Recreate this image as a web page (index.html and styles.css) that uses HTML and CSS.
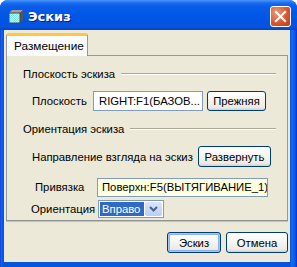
FILE: index.html
```html
<!DOCTYPE html>
<html lang="ru">
<head>
    <meta charset="UTF-8">
    <title>Эскиз</title>
    <link rel="stylesheet" href="styles.css">
</head>
<body>
    <div class="window">
        <div class="titlebar">
            <svg class="app-icon" width="14" height="13" viewBox="0 0 14 13">
                <defs>
                    <pattern id="dots" width="2" height="2" patternUnits="userSpaceOnUse">
                        <rect width="2" height="2" fill="#7fe6e6"/>
                        <rect width="1" height="1" fill="#c8fafa"/>
                        <rect x="1" y="1" width="1" height="1" fill="#c8fafa"/>
                    </pattern>
                </defs>
                <polygon points="3,0 14,0 11,3 0,3" fill="#a0a0a0"/>
                <polygon points="11,3 14,0 14,10 11,13" fill="#555"/>
                <rect x="0" y="3" width="11" height="10" fill="url(#dots)" stroke="#444" stroke-width="1"/>
            </svg>
            <span class="title">Эскиз</span>
            <button class="close" type="button">
                <svg width="13" height="13" viewBox="0 0 13 13">
                    <path d="M2 2 L11 11 M11 2 L2 11" stroke="#fff" stroke-width="2.2" stroke-linecap="square"/>
                </svg>
            </button>
        </div>

        <div class="client">
            <div class="tabs">
                <div class="tab">Размещение</div>
            </div>

            <div class="panel">
                <div class="group-title">Плоскость эскиза<span class="rule"></span></div>
                <div class="row row-plane">
                    <span class="label">Плоскость</span>
                    <div class="field field-plane">RIGHT:F1(БАЗОВ...</div>
                    <button class="btn btn-prev" type="button">Прежняя</button>
                </div>

                <div class="group-title">Ориентация эскиза<span class="rule rule-orient"></span></div>
                <div class="row row-dir">
                    <span class="label">Направление взгляда на эскиз</span>
                    <button class="btn btn-flip" type="button">Развернуть</button>
                </div>
                <div class="row row-ref">
                    <span class="label">Привязка</span>
                    <div class="field field-ref">Поверхн:F5(ВЫТЯГИВАНИЕ_1)</div>
                </div>
                <div class="row row-orient">
                    <span class="label">Ориентация</span>
                    <div class="combo">
                        <span class="combo-value">Вправо</span>
                        <span class="combo-arrow">
                            <svg width="9" height="6" viewBox="0 0 9 6">
                                <path d="M1 1 L4.5 4.5 L8 1" fill="none" stroke="#4d6185" stroke-width="2"/>
                            </svg>
                        </span>
                    </div>
                </div>
            </div>

            <div class="footer">
                <button class="btn btn-default" type="button">Эскиз</button>
                <button class="btn btn-cancel" type="button">Отмена</button>
            </div>
        </div>
    </div>
</body>
</html>
```

FILE: styles.css
```css
body {
    margin: 0;
    font-family: "Liberation Sans", Arial, sans-serif;
    font-size: 11.3px;
    color: #000;
    background: #fff;
}

.window {
    width: 297px;
    height: 267px;
    display: flex;
    flex-direction: column;
    background: linear-gradient(to right, #0831d9 0, #1667ee 1px, #0855dd 3px, #0855dd 290px, #166aee 292px, #0c5ae4 295px, #0831d9 297px);
    border-radius: 8px 8px 0 0;
    overflow: hidden;
}

.titlebar {
    height: 30px;
    display: flex;
    align-items: center;
    padding: 0 6px 0 9px;
    background: linear-gradient(#4a96fa 0, #1b6cf0 3px, #0a5ee9 6px, #0058e6 14px, #0054e3 22px, #0a52dc 27px, #0743c2 30px);
    flex-shrink: 0;
}

.app-icon {
    margin-top: 3px;
    margin-right: 5px;
}

.title {
    color: #fff;
    font-family: "DejaVu Sans", sans-serif;
    font-weight: bold;
    font-size: 13px;
    text-shadow: 1px 1px 0 #0a1d8f;
    flex: 1;
    margin-top: 2px;
}

.close {
    width: 21px;
    height: 21px;
    padding: 0;
    margin-top: 3px;
    border: 1px solid #fff;
    border-radius: 3px;
    background: radial-gradient(circle at 30% 30%, #ec9a7c 0, #d9572f 55%, #c2391a 100%);
    display: flex;
    align-items: center;
    justify-content: center;
}

.client {
    flex: 1;
    margin: 0 7px 5px 4px;
    background: #ece9d8;
    padding: 2px 2px 0 2px;
    display: flex;
    flex-direction: column;
}

.tabs {
    display: flex;
    height: 23px;
}

.tab {
    width: 82px;
    background: #fcfcfe;
    border: 1px solid #919b9c;
    border-top: 3px solid #ffc83c;
    border-bottom: none;
    border-radius: 3px 3px 0 0;
    padding: 3px 0 0 7px;
    box-sizing: border-box;
    font-size: 11.8px;
    position: relative;
    top: 1px;
    z-index: 1;
}

.panel {
    height: 166px;
    box-sizing: border-box;
    border: 1px solid #919b9c;
    border-bottom-color: #8e9493;
    box-shadow: 0 1px 0 #c5c2b2;
    background: #ece9d8;
    padding: 11px 0 0 16px;
}

.group-title {
    display: flex;
    align-items: center;
    height: 14px;
    line-height: 14px;
}

.rule {
    height: 0;
    border-top: 1px solid #aca899;
    border-bottom: 1px solid #fff;
    margin-left: 6px;
    flex: 1;
    margin-right: 11px;
}

.row {
    display: flex;
    align-items: center;
}

.label {
    white-space: nowrap;
    flex-shrink: 0;
}

.row-plane {
    margin-top: 10px;
    padding-left: 9px;
    height: 20px;
}

.row-plane .label {
    width: 61px;
}

.row-plane + .group-title {
    margin-top: 11px;
}

.row-dir {
    margin-top: 10px;
    padding-left: 9px;
    height: 21px;
}

.row-dir .label {
    width: 166px;
}

.row-ref {
    margin-top: 10px;
    padding-left: 12px;
    height: 20px;
}

.row-ref .label {
    width: 62px;
}

.row-orient {
    margin-top: 3px;
    padding-left: 8px;
    height: 18px;
}

.row-orient .label {
    width: 67px;
}

.field {
    box-sizing: border-box;
    border: 1px solid #7f9db9;
    background: #fff;
    height: 20px;
    line-height: 18px;
    padding-left: 5px;
    white-space: nowrap;
    overflow: hidden;
}

.field-plane {
    width: 110px;
}

.field-ref {
    width: 171px;
    background: #ffffe1;
    padding-left: 4px;
    height: 19px;
    line-height: 17px;
}

.btn {
    font-family: "Liberation Sans", Arial, sans-serif;
    font-size: 11.3px;
    color: #000;
    box-sizing: border-box;
    height: 20px;
    padding: 0 4px;
    border: 1px solid #003c74;
    border-radius: 3px;
    background: linear-gradient(#fff 0, #f6f6f3 40%, #ecebe6 85%, #d6d0c5 100%);
}

.btn-prev {
    margin-left: 4px;
    width: 59px;
}

.btn-flip {
    width: 73px;
    height: 21px;
}

.combo {
    width: 66px;
    height: 18px;
    box-sizing: border-box;
    border: 1px solid #7f9db9;
    background: #fff;
    display: flex;
    padding: 1px;
}

.combo-value {
    flex: 1;
    background: #316ac5;
    color: #fff;
    line-height: 14px;
    padding-left: 2px;
}

.combo-arrow {
    width: 17px;
    margin-left: 1px;
    background: linear-gradient(#dbe6fd, #b9cdf8);
    border-radius: 2px;
    display: flex;
    align-items: center;
    justify-content: center;
}

.footer {
    display: flex;
    justify-content: flex-end;
    gap: 5px;
    padding-top: 11px;
}

.btn-default {
    width: 54px;
    height: 21px;
    box-shadow: inset 0 0 0 1px #a9c4f3, inset 0 0 0 2px #8bb1ee;
}

.btn-cancel {
    width: 62px;
    height: 21px;
}
```
